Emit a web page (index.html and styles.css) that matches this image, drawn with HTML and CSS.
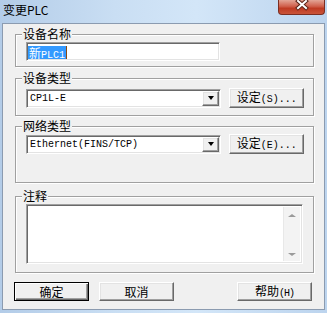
FILE: index.html
```html
<!DOCTYPE html>
<html lang="zh-CN">

<head>
    <meta charset="UTF-8">
    <meta name="viewport" content="width=device-width, initial-scale=1.0">
    <title>变更PLC</title>
    <link rel="stylesheet" href="styles.css">
</head>

<body>
    <div class="window">
        <div class="titlebar">
            <span class="title">变更PLC</span>
            <div class="close">
                <svg width="47" height="15" viewBox="0 0 47 15">
                    <path d="M20 2 L28 9 M28 2 L20 9" stroke="#5a2418" stroke-width="4" stroke-linecap="square" fill="none"/>
                    <path d="M20 2 L28 9 M28 2 L20 9" stroke="#ffffff" stroke-width="2" stroke-linecap="square" fill="none"/>
                </svg>
            </div>
        </div>

        <div class="client">
            <fieldset class="group g-name">
                <legend>设备名称</legend>
                <div class="edit sunken">
                    <span class="sel">新<span class="mono">PLC1</span></span><span class="caret"></span>
                </div>
            </fieldset>

            <fieldset class="group g-type">
                <legend>设备类型</legend>
                <div class="row">
                    <div class="combo sunken">
                        <span class="combo-text mono">CP1L-E</span>
                        <span class="drop raised"><span class="arrow"></span></span>
                    </div>
                    <button class="btn raised">设定<span class="mono">(S)...</span></button>
                </div>
            </fieldset>

            <fieldset class="group g-net">
                <legend>网络类型</legend>
                <div class="row">
                    <div class="combo sunken">
                        <span class="combo-text mono">Ethernet(FINS/TCP)</span>
                        <span class="drop raised"><span class="arrow"></span></span>
                    </div>
                    <button class="btn raised">设定<span class="mono">(E)...</span></button>
                </div>
            </fieldset>

            <fieldset class="group g-memo">
                <legend>注释</legend>
                <div class="memo sunken">
                    <div class="memo-text"></div>
                    <div class="vscroll">
                        <span class="up"></span>
                        <span class="down"></span>
                    </div>
                </div>
            </fieldset>

            <div class="actions">
                <button class="btn raised default">确定</button>
                <button class="btn raised">取消</button>
                <button class="btn raised help">帮助<span class="mono narrow">(H)</span></button>
            </div>
        </div>
    </div>
</body>

</html>
```

FILE: styles.css
```css
* {
    box-sizing: border-box;
}

body {
    margin: 0;
    font-family: "Noto Sans CJK SC", sans-serif;
    font-size: 12px;
    color: #000;
}

.window {
    width: 327px;
    height: 313px;
    padding: 0 2px 3px;
    display: flex;
    flex-direction: column;
    background: linear-gradient(to right, #b3cce8, #c9def3 35%, #d3e6f8 60%, #bcd4ee);
}

.titlebar {
    height: 23px;
    display: flex;
    justify-content: space-between;
    align-items: flex-start;
}

.title {
    padding: 3px 0 0 1px;
    line-height: 13px;
}

.close {
    width: 47px;
    height: 15px;
    border: 1px solid #7b2e22;
    border-top: none;
    border-radius: 0 0 4px 4px;
    background: linear-gradient(to bottom, #e3a596, #d0604c 45%, #bf3b23 60%, #c9543a);
    overflow: hidden;
}

.close svg {
    display: block;
    margin: -1px 0 0 -1px;
}

.client {
    flex: 1;
    background: #f0f0f0;
    border: 1px solid #8b9bb0;
    padding: 4px 10px 0 12px;
}

.group {
    margin: 0;
    padding: 0 9px 5px 10px;
    border: 1px solid #a0a0a0;
    box-shadow: inset 1px 1px #fff, 1px 1px #fff;
    min-width: 0;
}

.group legend {
    margin-left: -4px;
    padding: 0 1px;
    line-height: 12px;
    background: #f0f0f0;
}

.g-type {
    margin-top: 5px;
    padding-bottom: 7px;
}

.g-net {
    margin-top: 4px;
    padding-bottom: 28px;
}

.g-memo {
    margin-top: 7px;
    padding-bottom: 8px;
}

.mono {
    font-family: "Liberation Mono", monospace;
    font-size: 10px;
}

.sunken {
    background: #fff;
    border: 1px solid;
    border-color: #a0a0a0 #fff #fff #a0a0a0;
    box-shadow: inset 1px 1px #696969, inset -1px -1px #e3e3e3;
}

.raised {
    background: #f0f0f0;
    border: 1px solid;
    border-color: #fff #696969 #696969 #fff;
    box-shadow: inset -1px -1px #a0a0a0, inset 1px 1px #e3e3e3;
}

.edit {
    margin-top: 2px;
    width: 194px;
    height: 19px;
    padding: 2px 0 0 1px;
    display: flex;
    align-items: center;
}

.sel {
    background: #3399ff;
    color: #fff;
    line-height: 13px;
    height: 13px;
    padding: 0 1px;
}

.caret {
    width: 1px;
    height: 13px;
    background: #8a4a12;
}

.row {
    margin-top: 4px;
    height: 20px;
    display: flex;
    align-items: center;
    gap: 8px;
}

.g-net .row {
    margin-top: 2px;
}

.combo {
    width: 196px;
    height: 19px;
    padding: 1px 1px 1px 2px;
    display: flex;
    align-items: center;
}

.combo-text {
    flex: 1;
    padding-left: 1px;
    line-height: 15px;
}

.drop {
    width: 17px;
    height: 15px;
    display: flex;
    align-items: center;
    justify-content: center;
}

.arrow {
    width: 0;
    height: 0;
    border-left: 3px solid transparent;
    border-right: 3px solid transparent;
    border-top: 4px solid #000;
}

.btn {
    width: 75px;
    height: 20px;
    padding: 0;
    font-family: "Noto Sans CJK SC", sans-serif;
    font-size: 12px;
    line-height: 16px;
    color: #000;
}

.narrow {
    letter-spacing: -1px;
}

.memo {
    margin-top: 2px;
    width: 277px;
    height: 60px;
    padding: 2px;
    display: flex;
}

.memo-text {
    flex: 1;
}

.vscroll {
    width: 17px;
    background: #f3f3f3;
    border-left: 1px solid #e8e8e8;
    display: flex;
    flex-direction: column;
    justify-content: space-between;
    align-items: center;
    padding: 7px 0 5px;
}

.up {
    width: 0;
    height: 0;
    border-left: 4px solid transparent;
    border-right: 4px solid transparent;
    border-bottom: 3px solid #9a9a9a;
}

.down {
    width: 0;
    height: 0;
    border-left: 4px solid transparent;
    border-right: 4px solid transparent;
    border-top: 3px solid #9a9a9a;
}

.actions {
    margin: 9px 2px 0 -1px;
    display: flex;
    gap: 10px;
}

.actions .btn {
    height: 19px;
}

.default {
    border-color: #000;
    box-shadow: inset 1px 1px #fff, inset -1px -1px #696969, inset -2px -2px #a0a0a0;
}

.help {
    margin-left: auto;
}
```
